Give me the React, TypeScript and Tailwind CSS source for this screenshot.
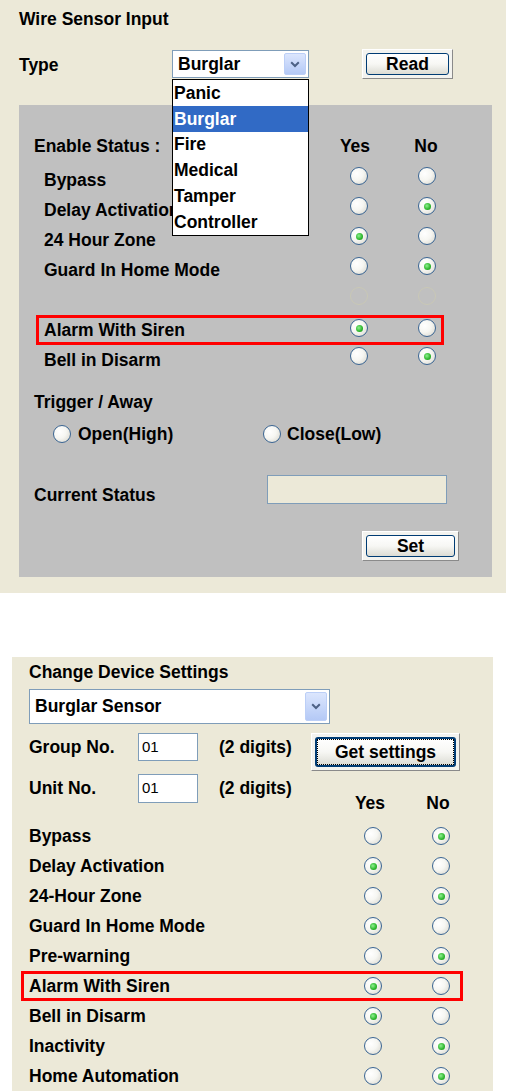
import React from "react";

const Radio = ({ checked = false, className = "" }: { checked?: boolean; className?: string }) => (
  <span
    className={`inline-flex w-[18px] h-[18px] shrink-0 rounded-full border border-[#3a6593] bg-[radial-gradient(circle_at_35%_35%,#ffffff_0%,#f6f6f2_45%,#d4d2c8_100%)] items-center justify-center ${className}`}
  >
    {checked && (
      <span className="w-[7px] h-[7px] rounded-full bg-[radial-gradient(circle_at_40%_40%,#8ef08e_0%,#2cb52c_60%,#168a16_100%)]" />
    )}
  </span>
);

const GhostRadio = () => (
  <span className="inline-block w-[18px] h-[18px] shrink-0 rounded-full border border-[#c9c8b6]" />
);

const XPButton = ({
  label,
  className,
  focus = false,
}: {
  label: string;
  className: string;
  focus?: boolean;
}) => (
  <div
    className={`${className} flex p-[3px] bg-[#f3f3ef] border border-t-white border-l-white border-r-[#8a8a8a] border-b-[#8a8a8a]`}
  >
    <div
      className={`flex-1 flex rounded-[3px] ${focus ? "border-2" : "border"} border-[#003C74] bg-linear-to-b from-white via-[#f7f7f4] to-[#dcdcd4]`}
    >
      <div
        className={`flex-1 flex items-center justify-center font-bold text-[17.5px] ${focus ? "border border-dotted border-black" : ""}`}
      >
        {label}
      </div>
    </div>
  </div>
);

const Arrow = ({ className }: { className: string }) => (
  <div
    className={`${className} rounded-[2px] border border-[#bccff7] bg-linear-to-b from-[#dce6fd] to-[#b4c9f6] flex items-center justify-center`}
  >
    <svg width="10" height="7" viewBox="0 0 10 7">
      <path d="M1.2 1.3 L5 5 L8.8 1.3" stroke="#4d6185" strokeWidth="2" fill="none" />
    </svg>
  </div>
);

type Val = "yes" | "no" | "none";

const TopRow = ({ label, v }: { label: string; v: Val }) => (
  <div className="h-[30px] flex items-center pl-[25px]">
    <div className="w-[306px] whitespace-nowrap">{label}</div>
    <Radio checked={v === "yes"} className="mb-[8px]" />
    <Radio checked={v === "no"} className="ml-[50px] mb-[8px]" />
  </div>
);

const BottomRow = ({ label, yes }: { label: string; yes: boolean }) => (
  <div className="h-[30px] flex items-center pl-[17px]">
    <div className="w-[335px] whitespace-nowrap">{label}</div>
    <Radio checked={yes} />
    <Radio checked={!yes} className="ml-[50px]" />
  </div>
);

export default function App() {
  const items = ["Panic", "Burglar", "Fire", "Medical", "Tamper", "Controller"];
  return (
    <div
      className="w-[506px] h-[1091px] overflow-hidden bg-white text-black text-[17.5px] font-bold"
      style={{ fontFamily: '"Liberation Sans", Arial, sans-serif' }}
    >
      {/* Top panel */}
      <div className="w-[506px] h-[593px] bg-[#ECE9D8] pt-[9px] flex flex-col">
        <div className="pl-[19px] h-[20px] leading-[20px]">Wire Sensor Input</div>
        <div className="mt-[20px] h-[30px] flex items-center pl-[19px] relative z-10">
          <div className="w-[153px] pt-[3px]">Type</div>
          <div className="relative w-[137px] h-[28px] border border-[#7F9DB9] bg-white flex items-center pl-[5px]">
            <span className="flex-1">Burglar</span>
            <Arrow className="w-[22px] h-[22px] mr-[2px]" />
            <div className="absolute left-[-1px] top-[28px] w-[137px] border border-black bg-white flex flex-col">
              {items.map((it) => (
                <div
                  key={it}
                  className={`h-[25.8px] flex items-center pl-[1px] ${it === "Burglar" ? "bg-[#316AC5] text-white" : ""}`}
                >
                  {it}
                </div>
              ))}
            </div>
          </div>
          <XPButton label="Read" className="ml-[53px] w-[91px] h-[30px]" />
        </div>

        <div className="mt-[26px] ml-[19px] w-[473px] h-[472px] bg-[#C0C0C0] flex flex-col">
          <div className="mt-[26px] h-[30px] flex items-center pl-[15px]">
            <div className="w-[301px]">Enable Status :</div>
            <div className="w-[40px] text-center">Yes</div>
            <div className="ml-[31px] w-[40px] text-center">No</div>
          </div>
          <div className="mt-[4px]" />
          <TopRow label="Bypass" v="none" />
          <TopRow label="Delay Activation" v="no" />
          <TopRow label="24 Hour Zone" v="yes" />
          <TopRow label="Guard In Home Mode" v="no" />
          <div className="h-[30px] flex items-center pl-[25px]">
            <div className="w-[306px]" />
            <span className="mb-[8px] flex">
              <GhostRadio />
            </span>
            <span className="ml-[50px] mb-[8px] flex">
              <GhostRadio />
            </span>
          </div>
          <div className="ml-[17px] w-[408px] h-[30px] border-[3px] border-[#FF0000] flex items-center pl-[5px]">
            <div className="w-[306px] whitespace-nowrap">Alarm With Siren</div>
            <Radio checked={true} className="mb-[4px]" />
            <Radio checked={false} className="ml-[50px] mb-[4px]" />
          </div>
          <TopRow label="Bell in Disarm" v="no" />

          <div className="mt-[12px] h-[30px] flex items-center pl-[15px]">Trigger / Away</div>
          <div className="mt-[2px] h-[30px] flex items-center pl-[34px]">
            <div className="w-[210px] flex items-center">
              <Radio />
              <span className="ml-[7px]">Open(High)</span>
            </div>
            <div className="flex items-center">
              <Radio />
              <span className="ml-[6px]">Close(Low)</span>
            </div>
          </div>

          <div className="mt-[25px] h-[30px] flex items-center pl-[15px]">
            <div className="w-[233px] mt-[12px]">Current Status</div>
            <div className="w-[180px] h-[29px] border border-[#7F9DB9] bg-[#ECE9D8]" />
          </div>

          <div className="mt-[27px] flex justify-end pr-[33px]">
            <XPButton label="Set" className="w-[97px] h-[30px]" />
          </div>
        </div>
      </div>

      {/* Bottom panel */}
      <div className="mt-[64px] ml-[12px] w-[481px] h-[434px] overflow-hidden bg-[#ECE9D8] pt-[5px] flex flex-col">
        <div className="pl-[17px] h-[20px] leading-[20px]">Change Device Settings</div>
        <div className="mt-[7px] ml-[17px] w-[301px] h-[35px] border border-[#7F9DB9] bg-white flex items-center pl-[5px]">
          <span className="flex-1">Burglar Sensor</span>
          <Arrow className="w-[22px] h-[29px] mr-[2px]" />
        </div>

        <div className="mt-[9px] h-[38px] flex items-start pl-[17px]">
          <div className="w-[109px] h-[28px] flex items-center">Group No.</div>
          <div className="w-[60px] h-[28px] border border-[#7F9DB9] bg-white flex items-center pl-[3px] font-normal text-[15px]">
            01
          </div>
          <div className="ml-[21px] w-[92px] h-[28px] flex items-center whitespace-nowrap">(2 digits)</div>
          <XPButton label="Get settings" className="w-[149px] h-[38px]" focus />
        </div>

        <div className="mt-[3px] h-[40px] flex items-start pl-[17px]">
          <div className="w-[109px] h-[29px] flex items-center">Unit No.</div>
          <div className="w-[60px] h-[29px] border border-[#7F9DB9] bg-white flex items-center pl-[3px] font-normal text-[15px]">
            01
          </div>
          <div className="ml-[21px] w-[92px] h-[29px] flex items-center whitespace-nowrap">(2 digits)</div>
          <div className="ml-[39px] mt-[19px] w-[40px] h-[20px] leading-[20px] text-center">Yes</div>
          <div className="ml-[28px] mt-[19px] w-[40px] h-[20px] leading-[20px] text-center">No</div>
        </div>

        <div className="mt-[7px]" />
        <BottomRow label="Bypass" yes={false} />
        <BottomRow label="Delay Activation" yes={true} />
        <BottomRow label="24-Hour Zone" yes={false} />
        <BottomRow label="Guard In Home Mode" yes={true} />
        <BottomRow label="Pre-warning" yes={false} />
        <div className="ml-[9px] w-[442px] h-[30px] border-[3px] border-[#FF0000] flex items-center pl-[5px]">
          <div className="w-[335px] whitespace-nowrap">Alarm With Siren</div>
          <Radio checked={true} />
          <Radio checked={false} className="ml-[50px]" />
        </div>
        <BottomRow label="Bell in Disarm" yes={true} />
        <BottomRow label="Inactivity" yes={false} />
        <BottomRow label="Home Automation" yes={false} />
      </div>
    </div>
  );
}
